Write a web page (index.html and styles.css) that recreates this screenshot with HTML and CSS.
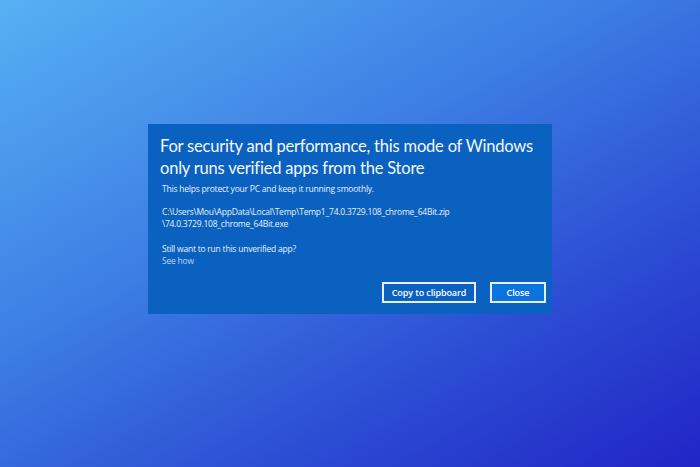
FILE: index.html
```html
<!DOCTYPE html>
<html lang="en">
  <head>
    <meta charset="UTF-8" />
    <meta name="viewport" content="width=device-width, initial-scale=1.0" />
    <title>Unverified app blocked</title>
    <link rel="stylesheet" href="styles.css">
  </head>
  <body>
    <div class="dialog">
      <h1 class="title">For security and performance, this mode of Windows only runs verified apps from the Store</h1>
      <p class="subtitle">This helps protect your PC and keep it running smoothly.</p>

      <p class="path">C:\Users\Mou\AppData\Local\Temp\Temp1_74.0.3729.108_chrome_64Bit.zip<br>\74.0.3729.108_chrome_64Bit.exe</p>

      <p class="question">Still want to run this unverified app?<br><span class="link">See how</span></p>

      <div class="button-group">
        <button class="btn">Copy to clipboard</button>
        <button class="btn btn-primary">Close</button>
      </div>
    </div>
  </body>
</html>
```

FILE: styles.css
```css
:root {
  --dialog: #0b61c0;
  --accent: #0b73de;
}

body {
  margin: 0;
  width: 700px;
  height: 467px;
  font-family: "Open Sans", "Noto Sans", sans-serif;
  background: linear-gradient(150deg, #57b0f4 0%, #3d7ee4 40%, #2d4fd4 70%, #2124c6 100%);
  display: flex;
  justify-content: center;
  align-items: flex-start;
  color: #fff;
}

.dialog {
  margin-top: 124px;
  width: 404px;
  height: 190px;
  box-sizing: border-box;
  background: var(--dialog);
  padding: 11px 6px 0 12px;
  display: flex;
  flex-direction: column;
}

.title {
  margin: 0;
  font-family: Lato, "Open Sans", sans-serif;
  font-weight: 400;
  font-size: 16.5px;
  line-height: 22px;
  letter-spacing: -0.2px;
  color: #f4f8fd;
}

.subtitle,
.path,
.question {
  margin: 0;
  padding-left: 2px;
  font-size: 8.5px;
  line-height: 12px;
  letter-spacing: -0.22px;
  color: #e8f0fa;
}

.subtitle {
  margin-top: 4px;
}

.path {
  margin-top: 11px;
}

.question {
  margin-top: 13px;
}

.link {
  color: #b9d6f5;
}

.button-group {
  display: flex;
  justify-content: flex-end;
  gap: 14px;
  margin-top: 15px;
}

.btn {
  font-family: inherit;
  font-size: 9px;
  font-weight: 600;
  letter-spacing: -0.1px;
  color: #fff;
  background: transparent;
  border: 2px solid #e6eef8;
  height: 21px;
  padding: 0 6px;
  cursor: pointer;
}

.btn:first-child {
  width: 94px;
}

.btn-primary {
  background: var(--accent);
  width: 56px;
}
```
